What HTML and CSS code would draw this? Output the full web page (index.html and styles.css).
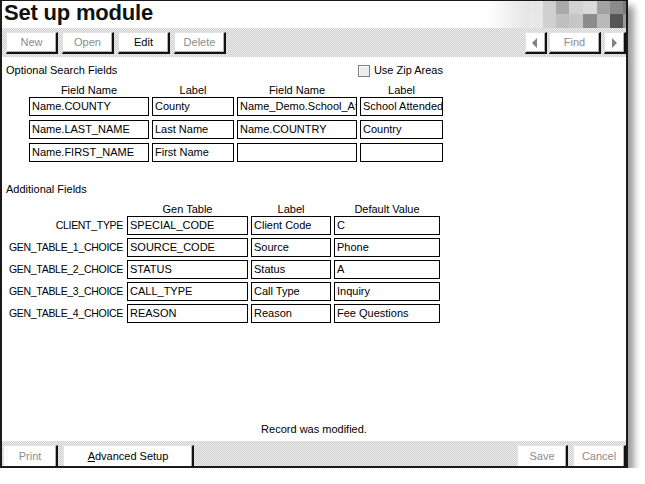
FILE: index.html
```html
<!DOCTYPE html>
<html lang="en">
<head>
    <meta charset="UTF-8">
    <meta name="viewport" content="width=device-width, initial-scale=1.0">
    <title>Set up module</title>
    <link rel="stylesheet" href="styles.css">
</head>
<body>

    <div class="window">
        <div class="titlebar">
            <h1>Set up module</h1>
            <svg class="mosaic" width="139" height="27" viewBox="0 0 139 27">
                <defs>
                    <linearGradient id="fade" x1="0" x2="1" y1="0" y2="0">
                        <stop offset="0" stop-color="#ffffff"/>
                        <stop offset="1" stop-color="#e4e4e4"/>
                    </linearGradient>
                </defs>
                <rect x="0" y="0" width="42" height="27" fill="url(#fade)"/>
                <!-- top row -->
                <rect x="42" y="0" width="14" height="13" fill="#e6e6e6"/>
                <rect x="56" y="0" width="13" height="13" fill="#cfcfcf"/>
                <rect x="69" y="0" width="13" height="13" fill="#a9a9a9"/>
                <rect x="82" y="0" width="14" height="13" fill="#d2d2d2"/>
                <rect x="96" y="0" width="14" height="13" fill="#dadada"/>
                <rect x="110" y="0" width="13" height="13" fill="#a2a2a2"/>
                <rect x="123" y="0" width="13" height="13" fill="#8a8a8a"/>
                <rect x="136" y="0" width="3" height="13" fill="#7a7a7a"/>
                <!-- bottom row -->
                <rect x="42" y="13" width="14" height="14" fill="#e8e8e8"/>
                <rect x="56" y="13" width="13" height="14" fill="#d0d0d0"/>
                <rect x="69" y="13" width="13" height="14" fill="#c0c0c0"/>
                <rect x="82" y="13" width="14" height="14" fill="#c6c6c6"/>
                <rect x="96" y="13" width="14" height="14" fill="#8c8c8c"/>
                <rect x="110" y="13" width="13" height="14" fill="#b9b9b9"/>
                <rect x="123" y="13" width="13" height="14" fill="#555555"/>
                <rect x="136" y="13" width="3" height="14" fill="#9a9a9a"/>
            </svg>
        </div>

        <div class="toolbar">
            <div class="btn-group">
                <button class="btn off">New</button>
                <button class="btn off">Open</button>
                <button class="btn">Edit</button>
                <button class="btn off">Delete</button>
            </div>
            <div class="btn-group nav">
                <button class="btn arrow">
                    <svg width="6" height="10" viewBox="0 0 6 10"><polygon points="5,0 5,10 0,5" fill="#808080"/></svg>
                </button>
                <button class="btn off find">Find</button>
                <button class="btn arrow">
                    <svg width="6" height="10" viewBox="0 0 6 10"><polygon points="1,0 1,10 6,5" fill="#808080"/></svg>
                </button>
            </div>
        </div>

        <div class="content">
            <div class="search">
                <div class="section-head">
                    <span>Optional Search Fields</span>
                    <label class="check"><span class="box"></span>Use Zip Areas</label>
                </div>
                <div class="search-grid">
                    <div class="col-head">Field Name</div>
                    <div class="col-head">Label</div>
                    <div class="col-head">Field Name</div>
                    <div class="col-head">Label</div>

                    <div class="field">Name.COUNTY</div>
                    <div class="field">County</div>
                    <div class="field">Name_Demo.School_Att</div>
                    <div class="field">School Attended</div>

                    <div class="field">Name.LAST_NAME</div>
                    <div class="field">Last Name</div>
                    <div class="field">Name.COUNTRY</div>
                    <div class="field">Country</div>

                    <div class="field">Name.FIRST_NAME</div>
                    <div class="field">First Name</div>
                    <div class="field"></div>
                    <div class="field"></div>
                </div>
            </div>

            <div class="additional">
                <div class="section-title">Additional Fields</div>
                <div class="add-grid">
                    <div></div>
                    <div class="col-head">Gen Table</div>
                    <div class="col-head">Label</div>
                    <div class="col-head">Default Value</div>

                    <div class="row-label">CLIENT_TYPE</div>
                    <div class="field">SPECIAL_CODE</div>
                    <div class="field">Client Code</div>
                    <div class="field">C</div>

                    <div class="row-label">GEN_TABLE_1_CHOICE</div>
                    <div class="field">SOURCE_CODE</div>
                    <div class="field">Source</div>
                    <div class="field">Phone</div>

                    <div class="row-label">GEN_TABLE_2_CHOICE</div>
                    <div class="field">STATUS</div>
                    <div class="field">Status</div>
                    <div class="field">A</div>

                    <div class="row-label">GEN_TABLE_3_CHOICE</div>
                    <div class="field">CALL_TYPE</div>
                    <div class="field">Call Type</div>
                    <div class="field">Inquiry</div>

                    <div class="row-label">GEN_TABLE_4_CHOICE</div>
                    <div class="field">REASON</div>
                    <div class="field">Reason</div>
                    <div class="field">Fee Questions</div>
                </div>
            </div>
        </div>

        <div class="status">Record was modified.</div>

        <div class="footer">
            <div class="btn-group">
                <button class="btn off print">Print</button>
                <button class="btn advanced"><u>A</u>dvanced Setup</button>
            </div>
            <div class="btn-group">
                <button class="btn off save">Save</button>
                <button class="btn off cancel">Cancel</button>
            </div>
        </div>
    </div>

</body>
</html>
```

FILE: styles.css
```css
body {
    margin: 0;
    background: #fff;
    font-family: "Liberation Sans", Arial, sans-serif;
    font-size: 11px;
    color: #000;
}
.window {
    width: 624px;
    height: 465px;
    border-top: 1px solid #1a1a1a;
    border-left: 2px solid #1a1a1a;
    border-right: 2px solid #1a1a1a;
    border-bottom: 2px solid #1a1a1a;
    display: flex;
    flex-direction: column;
    box-shadow: 6px 6px 7px rgba(0, 0, 0, 0.4);
}
.titlebar {
    height: 27px;
    display: flex;
    justify-content: space-between;
}
.titlebar h1 {
    margin: 0;
    padding-left: 2px;
    font-size: 22px;
    line-height: 24px;
    font-weight: bold;
    letter-spacing: -0.2px;
    color: #111;
}
.mosaic {
    display: block;
}
.toolbar, .footer {
    background: repeating-conic-gradient(#cdcdcd 0 25%, #efefef 0 50%) 0 0 / 2px 2px;
    display: flex;
    justify-content: space-between;
}
.toolbar {
    height: 29px;
    box-sizing: border-box;
    padding: 4px 0 0 4px;
}
.btn-group {
    display: flex;
    gap: 4px;
}
.btn {
    box-sizing: border-box;
    width: 52px;
    height: 22px;
    margin: 0;
    padding: 0;
    background: #fff;
    border-top: 1px solid #e2e2e2;
    border-left: 1px solid #e2e2e2;
    border-right: 2px solid #111;
    border-bottom: 2px solid #111;
    box-shadow: inset -1px -1px 0 #b0b0b0;
    font-family: "Liberation Sans", Arial, sans-serif;
    font-size: 11px;
    line-height: 19px;
    color: #000;
}
.btn.off {
    color: #8c8c8c;
}
.nav {
    gap: 2px;
}
.btn.arrow {
    width: 22px;
    display: flex;
    align-items: center;
    justify-content: center;
    padding-right: 2px;
}
.btn.arrow svg {
    display: block;
}
.btn.find {
    width: 52px;
    margin-right: 1px;
}
.content {
    flex: 1;
    padding: 7px 0 0 4px;
}
.search {
    width: 437px;
}
.section-head {
    display: flex;
    justify-content: space-between;
    line-height: 13px;
}
.check {
    display: flex;
    align-items: center;
    gap: 4px;
}
.box {
    width: 10px;
    height: 10px;
    border: 1px solid #808080;
    background: #ececec;
    box-shadow: inset 1px 1px 0 #fff;
}
.search-grid {
    display: grid;
    grid-template-columns: 120px 82px 120px 83px;
    column-gap: 3px;
    margin: 6px 0 0 23px;
}
.col-head {
    text-align: center;
    line-height: 14px;
}
.field {
    box-sizing: border-box;
    height: 19px;
    margin-bottom: 4px;
    border: 1px solid #000;
    padding: 0 1px 0 2px;
    line-height: 17px;
    background: #fff;
    white-space: nowrap;
    overflow: hidden;
}
.additional {
    margin-top: 17px;
}
.section-title {
    line-height: 13px;
}
.add-grid {
    display: grid;
    grid-template-columns: 118px 121px 80px 106px;
    column-gap: 3px;
    margin-top: 7px;
}
.add-grid .col-head {
    line-height: 13px;
}
.add-grid .field {
    margin-bottom: 3px;
}
.row-label {
    text-align: right;
    font-size: 10.5px;
    letter-spacing: -0.3px;
    line-height: 19px;
    padding-right: 1px;
    white-space: nowrap;
}
.status {
    text-align: center;
    line-height: 13px;
    margin-bottom: 5px;
}
.footer {
    height: 25px;
    align-items: flex-end;
    padding: 0 0 0 1px;
}
.footer .btn {
    height: 21px;
    border-bottom: none;
    box-shadow: inset -1px 0 0 #b0b0b0;
}
.footer .btn-group {
    gap: 5px;
}
.btn.print {
    width: 55px;
}
.btn.advanced {
    width: 131px;
}
.btn.save {
    width: 51px;
}
.btn.cancel {
    width: 53px;
}
```
